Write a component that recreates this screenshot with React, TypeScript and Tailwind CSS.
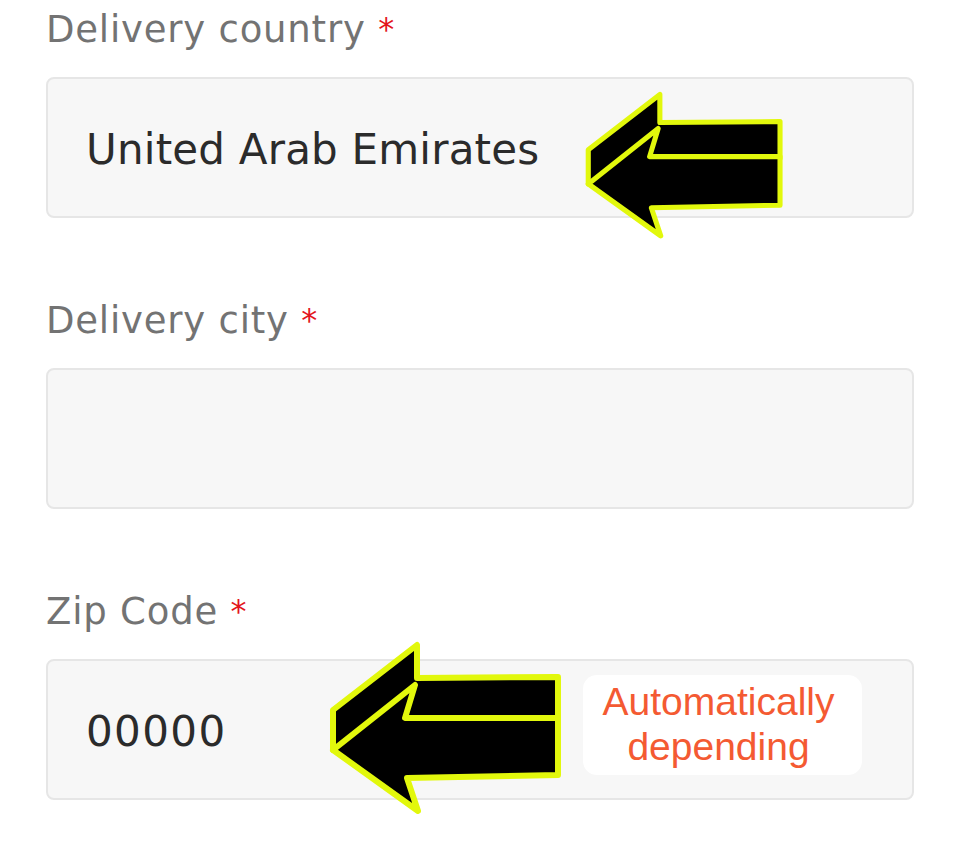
import React from "react";

function Arrow({ className }: { className: string }) {
  const stroke = "#e2f80c";
  return (
    <svg
      className={className}
      viewBox="-3 -3 237 178"
      fill="none"
      xmlns="http://www.w3.org/2000/svg"
    >
      <polygon
        points="2,67 86,2 86,35 227,34 227,77 74,75 2,107"
        fill="#000"
        stroke={stroke}
        strokeWidth="6"
        strokeLinejoin="round"
      />
      <polygon
        points="2,107 84,42 74,75 227,75 227,132 76,135 87,168"
        fill="#000"
        stroke={stroke}
        strokeWidth="6"
        strokeLinejoin="round"
      />
    </svg>
  );
}

function Label({ text }: { text: string }) {
  return (
    <div className="h-[44px] text-[37px] leading-[44px] text-[#737373] font-['DejaVu_Sans',sans-serif] tracking-[0.8px]">
      {text}{" "}
      <span className="relative top-[-2px] text-[32px] leading-[0] text-[#e3141c]">*</span>
    </div>
  );
}

export default function App() {
  return (
    <div className="min-h-[861px] w-[960px] bg-white pt-2 pl-[46px] font-['DejaVu_Sans',sans-serif]">
      <div className="flex w-[868px] flex-col gap-[81px]">
        <div className="flex flex-col gap-[25px]">
          <Label text="Delivery country" />
          <div className="relative flex h-[141px] items-center rounded-lg border-2 border-[#e6e6e6] bg-[#f7f7f7] pl-[38px]">
            <span className="pt-[4px] text-[42px] tracking-[0.2px] text-[#2b2b2b]">United Arab Emirates</span>
            <Arrow className="absolute left-[536px] top-[11px] h-[152px] w-[202px]" />
          </div>
        </div>
        <div className="flex flex-col gap-[25px]">
          <Label text="Delivery city" />
          <div className="h-[141px] rounded-lg border-2 border-[#e6e6e6] bg-[#f7f7f7]" />
        </div>
        <div className="flex flex-col gap-[25px]">
          <Label text="Zip Code" />
          <div className="relative flex h-[141px] items-center justify-between rounded-lg border-2 border-[#e6e6e6] bg-[#f7f7f7] pl-[38px] pr-[50px]">
            <span className="pt-[4px] text-[42px] tracking-[1.4px] text-[#2b2b2b]">00000</span>
            <div className="mb-[9px] w-[279px] rounded-[14px] bg-white pb-1.5 pt-1 pr-[8px] text-center font-['Liberation_Sans',Arial,sans-serif] text-[39px] leading-[45px] text-[#f45a32]">
              Automatically
              <br />
              depending
            </div>
            <Arrow className="absolute left-[280px] top-[-21px] h-[178px] w-[237px]" />
          </div>
        </div>
      </div>
    </div>
  );
}
